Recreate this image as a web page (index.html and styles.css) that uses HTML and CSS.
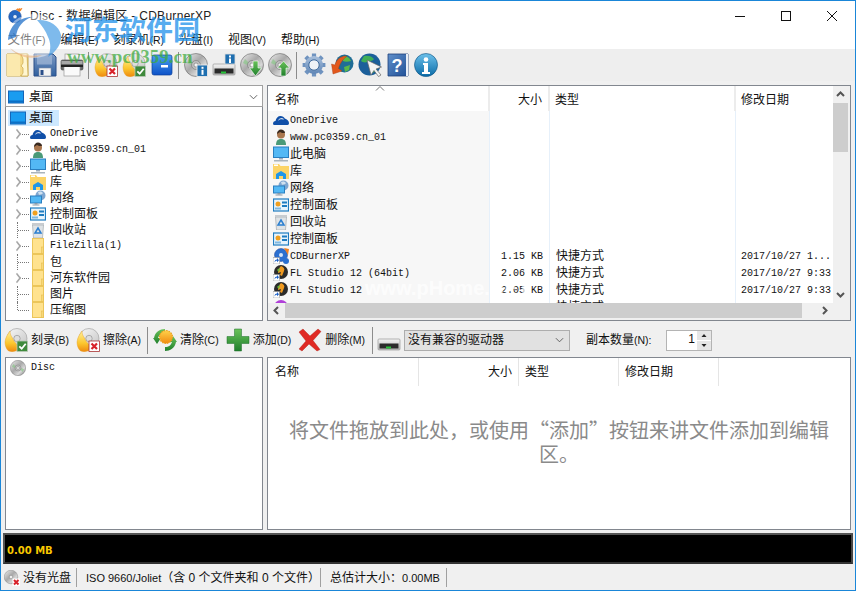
FILE: index.html
```
<!DOCTYPE html>
<html lang="zh">
<head>
<meta charset="utf-8">
<title>Disc - 数据编辑区 - CDBurnerXP</title>
<link rel="stylesheet" href="styles.css">
</head>
<body>
<svg class="sprite" xmlns="http://www.w3.org/2000/svg">
  <defs>
    <linearGradient id="gCd" x1="0" y1="0" x2="1" y2="1"><stop offset="0" stop-color="#eeeeee"/><stop offset=".45" stop-color="#a9a9a9"/><stop offset=".7" stop-color="#d8d8d8"/><stop offset="1" stop-color="#777"/></linearGradient>
    <linearGradient id="gBurn" x1="0" y1="0" x2="1" y2="1"><stop offset="0" stop-color="#f8f8f8"/><stop offset="1" stop-color="#c4c4c4"/></linearGradient>
    <linearGradient id="gFlame" x1="0" y1="0" x2="0" y2="1"><stop offset="0" stop-color="#fff09a"/><stop offset=".6" stop-color="#fbc62e"/><stop offset="1" stop-color="#ee8a10"/></linearGradient>
    <linearGradient id="gBlue" x1="0" y1="0" x2="0" y2="1"><stop offset="0" stop-color="#4aa0f0"/><stop offset="1" stop-color="#0d52c8"/></linearGradient>
    <linearGradient id="gBook" x1="0" y1="0" x2="1" y2="1"><stop offset="0" stop-color="#5f8fca"/><stop offset="1" stop-color="#1f4f96"/></linearGradient>
    <linearGradient id="gInfo" x1="0" y1="0" x2="0" y2="1"><stop offset="0" stop-color="#6cc0ea"/><stop offset="1" stop-color="#0b6ca8"/></linearGradient>
    <linearGradient id="gDrive" x1="0" y1="0" x2="0" y2="1"><stop offset="0" stop-color="#f4f4f4"/><stop offset="1" stop-color="#b8b8b8"/></linearGradient>
    <linearGradient id="gSun" x1="0" y1="0" x2="0" y2="1"><stop offset="0" stop-color="#ffd24a"/><stop offset="1" stop-color="#f08a10"/></linearGradient>
    <linearGradient id="gGreen" x1="0" y1="0" x2="0" y2="1"><stop offset="0" stop-color="#6ac25a"/><stop offset="1" stop-color="#1f7f2c"/></linearGradient>
    <linearGradient id="gFloppy" x1="0" y1="0" x2="0" y2="1"><stop offset="0" stop-color="#7d9ac4"/><stop offset="1" stop-color="#2f5f9e"/></linearGradient>
    <linearGradient id="gGear" x1="0" y1="0" x2="0" y2="1"><stop offset="0" stop-color="#a9c0dc"/><stop offset="1" stop-color="#5f86b6"/></linearGradient>

    <symbol id="cd" viewBox="0 0 24 24"><circle cx="12" cy="12" r="11.500" fill="url(#gCd)" stroke="#666" stroke-width=".6"/><path d="M5 6l4 4-2 2-4-2zM19 18l-4-4 2-2 4 2z" fill="#8cc88a" opacity=".7"/><circle cx="12" cy="12" r="4.500" fill="#bdbdbd" stroke="#777" stroke-width=".6"/><circle cx="12" cy="12" r="2" fill="#f4f4f4" stroke="#666" stroke-width=".5"/></symbol>
    <symbol id="burndisc" viewBox="0 0 24 24"><circle cx="13" cy="10.500" r="10" fill="url(#gBurn)" stroke="#999" stroke-width=".6"/><circle cx="13" cy="10.500" r="3.200" fill="#ddd" stroke="#888" stroke-width=".6"/><path d="M1 14C1.500 9 4 6 6 3c0 3 1 5 2.500 7 1 2 1.500 4 4 6 1.500 1 1.500 4 .5 6.500-3 1.500-7 1.500-9 0-2-2-3-5.500-3-8.500z" fill="url(#gFlame)" stroke="#e99a18" stroke-width=".4"/></symbol>
    <symbol id="badge-x" viewBox="0 0 24 24"><rect x="13" y="13" width="10.500" height="10.500" fill="#fff" stroke="#a33" stroke-width=".8"/><path d="M15.500 15.500l5.500 5.500M21 15.500l-5.500 5.500" stroke="#d8222a" stroke-width="2.200"/></symbol>
    <symbol id="badge-ok" viewBox="0 0 24 24"><rect x="13" y="13" width="10.500" height="10.500" fill="#3f8a3c" stroke="#b9c9b6" stroke-width=".8"/><path d="M15.300 18.300l2.400 2.400 4-5" fill="none" stroke="#fff" stroke-width="1.800"/></symbol>
    <symbol id="badge-i" viewBox="0 0 24 24"><rect x="13" y="12" width="10.500" height="11.500" fill="#1f6fb0" stroke="#e8e8e8" stroke-width=".9"/><rect x="17.500" y="13.800" width="2" height="2" fill="#fff"/><rect x="17.500" y="16.800" width="2" height="5" fill="#fff"/></symbol>

    <symbol id="i-folder" viewBox="0 0 24 24"><path d="M1 1h21v22H1z" fill="#f6dc8c" stroke="#c8a84a"/><path d="M1 1h13v22H1z" fill="#fbe9ae"/><path d="M15 1h6l1 22h-7l2-3v-5l-2-2 2-3V6z" fill="#fff6d0" stroke="#c8a84a" stroke-width=".7"/></symbol>
    <symbol id="i-save" viewBox="0 0 24 24"><path d="M1 1h19l3 3v19H1z" fill="url(#gFloppy)" stroke="#2a4f88"/><rect x="4" y="1.500" width="15" height="10" fill="#9fb6d6" opacity=".75"/><rect x="6" y="15" width="12" height="8" fill="#f4f4f4" stroke="#7d8ba3" stroke-width=".6"/><rect x="7.500" y="17" width="3" height="5" fill="#2a4f8a"/></symbol>
    <symbol id="i-print" viewBox="0 0 24 24"><rect x="5" y="1" width="14" height="7" fill="#f4f4f4" stroke="#999" stroke-width=".7"/><rect x="1" y="7" width="22" height="10" rx="1.500" fill="#6a6a6a" stroke="#444" stroke-width=".6"/><rect x="1.500" y="8" width="21" height="3" fill="#a8a8a8"/><rect x="4" y="13" width="16" height="10" fill="#fafafa" stroke="#999" stroke-width=".7"/><rect x="1" y="12" width="22" height="2" fill="#222"/></symbol>
    <symbol id="i-burn-x" viewBox="0 0 24 24"><use href="#burndisc"/><use href="#badge-x"/></symbol>
    <symbol id="i-burn-ok" viewBox="0 0 24 24"><use href="#burndisc"/><use href="#badge-ok"/></symbol>
    <symbol id="i-blue" viewBox="0 0 24 24"><rect x="2" y="2" width="20" height="20" rx="2" fill="url(#gBlue)" stroke="#0d3f9a" stroke-width=".7"/><rect x="11" y="12" width="7" height="2.500" fill="#fff"/></symbol>
    <symbol id="i-cd-info" viewBox="0 0 24 24"><use href="#cd"/><use href="#badge-i"/></symbol>
    <symbol id="drive" viewBox="0 0 24 24"><rect x="1" y="11" width="22" height="11" rx="1" fill="url(#gDrive)" stroke="#9a9a9a" stroke-width=".7"/><rect x="2.500" y="15.500" width="19" height="5" fill="#2b2b2b"/><rect x="9" y="18.500" width="5" height="2" fill="#27c43b"/></symbol>
    <symbol id="i-drive-info" viewBox="0 0 24 24"><use href="#drive"/><rect x="13" y="1" width="10" height="10" fill="#1f6fb0" stroke="#ddd" stroke-width=".8"/><rect x="17" y="2.500" width="2" height="2" fill="#fff"/><rect x="17" y="5.500" width="2" height="4.500" fill="#fff"/></symbol>
    <symbol id="i-cd-down" viewBox="0 0 24 24"><use href="#cd"/><path d="M13 8h5v7h3.500l-6 8-6-8H13z" fill="url(#gGreen)" stroke="#fff" stroke-width=".6"/></symbol>
    <symbol id="i-cd-up" viewBox="0 0 24 24"><use href="#cd"/><path d="M15.500 8l6 7H18v8h-5v-8H9.500z" fill="url(#gGreen)" stroke="#fff" stroke-width=".6"/></symbol>
    <symbol id="i-gear" viewBox="0 0 24 24"><g stroke="#6f93bf" stroke-width="4.200"><path d="M12 .6v22.800M.6 12h22.800M3.800 3.800l16.400 16.400M20.200 3.800L3.800 20.200"/></g><circle cx="12" cy="12" r="9" fill="url(#gGear)"/><circle cx="12" cy="12" r="5.200" fill="#eef2f7" stroke="#3f6a9c"/></symbol>
    <symbol id="i-update" viewBox="0 0 24 24"><circle cx="14.500" cy="10.500" r="9" fill="#1f6d96"/><path d="M13 3c4 0 7 2 8 5-3 1-6 1-8 0zM14 14l6-2-1 5-4 2z" fill="#5ab848"/><path d="M17 3C10 3 6 7 5 12l-3.500-1L3 21l9-3-3.500-2.500C10 11 12 7 17 3z" fill="#e2581c" stroke="#a83a10" stroke-width=".4"/></symbol>
    <symbol id="i-web" viewBox="0 0 24 24"><circle cx="11.500" cy="11.500" r="11" fill="#1b5f9a"/><path d="M6 3c4-1 8 0 10 3-2 3-5 1-7 3-2 1-5 0-6-1zM13 12c3 0 6 0 7 1-1 4-4 7-6 7-2-2-2-5-1-8z" fill="#3fae56"/><path d="M9 7l14.500 7-5.500 2 5 6-2.500 1.500-4.500-6L13 22z" fill="#f4f4f4" stroke="#666" stroke-width=".7"/></symbol>
    <symbol id="i-help" viewBox="0 0 24 24"><path d="M2 1h20v22H2z" fill="url(#gBook)" stroke="#1f3f78" stroke-width=".8"/><path d="M20 1h2v22h-2z" fill="#e8eef6"/><text x="11" y="19" text-anchor="middle" font-family="Liberation Sans" font-weight="700" font-size="18" fill="#fff">?</text></symbol>
    <symbol id="i-info" viewBox="0 0 24 24"><circle cx="12" cy="12" r="11.500" fill="url(#gInfo)" stroke="#0a4f80" stroke-width=".6"/><circle cx="12" cy="6.500" r="2.300" fill="#fff"/><path d="M9 10h5v9h2v2H8v-2h2v-7H9z" fill="#fff"/></symbol>

    <symbol id="i-clear" viewBox="0 0 24 24"><path d="M1 10C2 4 7 1 12 1v4C8 5 6 7 5 10h3l-4 6-4-6z" fill="url(#gGreen)"/><path d="M23 14c-1 6-6 9-11 9v-4c4 0 6-2 7-5h-3l4-6 4 6z" fill="url(#gGreen)"/><circle cx="13" cy="9" r="6.500" fill="url(#gSun)" stroke="#e8a020" stroke-width="1.200" stroke-dasharray="1.500 1"/></symbol>
    <symbol id="i-add" viewBox="0 0 24 24"><path d="M8.500 1h7v7.500H23v7h-7.500V23h-7v-7.500H1v-7h7.500z" fill="url(#gGreen)" stroke="#1c6f2a" stroke-width=".5"/></symbol>
    <symbol id="i-del" viewBox="0 0 24 24"><path d="M1 4l4-3 7 7 8-7 3 2.500-8 9 7 9-3 1.500-8-7-7 7-3-2 7-8z" fill="#e02a24" stroke="#a81810" stroke-width=".4"/></symbol>

    <symbol id="i-desktop" viewBox="0 0 16 16"><rect x=".5" y="2" width="15" height="12" fill="#1a9cf0" stroke="#1565b8"/><rect x="1" y="11.500" width="14" height="2" fill="#0d6fc4"/></symbol>
    <symbol id="i-onedrive" viewBox="0 0 16 16"><path d="M0 12c0-2 1-3 2.500-3C3 6 5 4 7.500 4c2 0 3.500 1 4.300 2.500C14 7 16 9 16 11c0 1-.5 2-1.500 2H2c-1 0-2-.3-2-1z" fill="#0f4fa8"/><path d="M5.500 8c1-1 3-2 5-.8" stroke="#fff" stroke-width="1" fill="none"/></symbol>
    <symbol id="i-user" viewBox="0 0 16 16"><path d="M3 16c0-4 1.500-6 5-6s5 2 5 6z" fill="#4a9a78"/><circle cx="8" cy="5.500" r="4" fill="#a9764e"/><path d="M4 5c0-3 2-4.500 4-4.500S12 2 12 4c-2 0-4 0-5-1-1 1-2 1-3 2z" fill="#3a2a20"/></symbol>
    <symbol id="i-pc" viewBox="0 0 16 16"><rect x=".5" y="1" width="15" height="10.500" fill="#53b8f4" stroke="#2a7fc0"/><rect x="6" y="12" width="4" height="1.500" fill="#9ab"/><rect x="1" y="14" width="14" height="1.500" fill="#aab4bc"/></symbol>
    <symbol id="i-lib" viewBox="0 0 16 16"><path d="M0 1h6l1.500 2H16v13H0z" fill="#fcd467"/><rect x="1" y="1.500" width="4" height="1.500" fill="#fff"/><path d="M3 11l5-3 5 3v5h-3v-3H6v3H3z" fill="#1f96e8"/></symbol>
    <symbol id="i-net" viewBox="0 0 16 16"><circle cx="10.500" cy="5.500" r="5" fill="#7fa6d0"/><path d="M8 2c2-1 4-.5 5 1-1 2-3 1-4 2z" fill="#cfe0ef"/><rect x=".5" y="6" width="11" height="7" fill="#53b8f4" stroke="#2a7fc0"/><rect x="4.500" y="13" width="3" height="1.500" fill="#8a9aa8"/><rect x="2.500" y="14.500" width="7" height="1" fill="#8a9aa8"/></symbol>
    <symbol id="i-cp" viewBox="0 0 16 16"><rect x=".5" y="2" width="15" height="12" fill="#e8f4fc" stroke="#1f7cc0" stroke-width="1.200"/><circle cx="5" cy="7" r="2.500" fill="#f0a020"/><rect x="9" y="4.500" width="5" height="2" fill="#1f7cc0"/><rect x="9" y="8" width="5" height="2" fill="#1f7cc0"/><rect x="2" y="10.500" width="6" height="2" fill="#7fb8e0"/></symbol>
    <symbol id="i-bin" viewBox="0 0 16 16"><path d="M2.500 3h11l-1 13h-9z" fill="#dfe3e6" stroke="#a4a9ad" stroke-width=".7"/><rect x="2" y="1" width="12" height="2" fill="#c8ccd0"/><path d="M8 6l3 5H5z" fill="none" stroke="#2b7fd0" stroke-width="1.500"/></symbol>
    <symbol id="i-yf" viewBox="0 0 16 16"><rect x="2.500" y=".5" width="11" height="15" fill="#ffe28e" stroke="#ecc65a"/><rect x="11.500" y="9" width="2" height="6.500" fill="#f7d878" stroke="#e4b94a" stroke-width=".5"/></symbol>
    <symbol id="shortcut" viewBox="0 0 16 16"><rect x="0" y="9.500" width="6.500" height="6.500" fill="#fff" stroke="#8a8a8a" stroke-width=".5"/><path d="M1.500 14.500c0-2 1-3 2.500-3V10l2 2.200L4 14.300v-1.500c-1 0-2 .5-2.500 1.700z" fill="#1b60c8"/></symbol>
    <symbol id="i-cdb" viewBox="0 0 16 16"><circle cx="8" cy="7" r="6.500" fill="#2a6fd0" stroke="#173f90" stroke-width=".5"/><circle cx="8" cy="7" r="2" fill="#d4e4f8"/><path d="M11 0l5 1-1 6z" fill="#f08020"/><circle cx="13" cy="13" r="3" fill="#2a6fd0"/><use href="#shortcut"/></symbol>
    <symbol id="i-fl" viewBox="0 0 16 16"><circle cx="8" cy="7" r="7" fill="#2b2b2b"/><path d="M8 1c3 1 4 3 3 5l-2 5-2-1 1-3-3 1c0-3 1-5 3-7z" fill="#f09a20"/><path d="M4 5c1-1 2-2 3-2l-1 4z" fill="#6cb83a"/><use href="#shortcut"/></symbol>
    <symbol id="i-purple" viewBox="0 0 16 16"><circle cx="8" cy="8" r="7" fill="#b040d8"/></symbol>
    <symbol id="i-app" viewBox="0 0 24 24"><circle cx="10.500" cy="13" r="9.500" fill="#2568c4" stroke="#123f8a" stroke-width=".7"/><circle cx="10.500" cy="13" r="3" fill="#e4eefa" stroke="#123f8a" stroke-width=".5"/><path d="M11 1c2 1 3 0 4-1 0 1.500 1 2 3-.5 0 1.500 0 2.500 4-.5-1 3-3 6-5 7-2-2-4-3-6-5z" fill="#f0862a"/></symbol>
    <symbol id="i-nodisc" viewBox="0 0 16 16"><circle cx="7" cy="7" r="6.800" fill="url(#gCd)" stroke="#777" stroke-width=".4"/><circle cx="7" cy="7" r="1.800" fill="#eee" stroke="#666" stroke-width=".4"/><rect x="8.500" y="8.500" width="7.500" height="7.500" fill="#fff"/><path d="M10 10l4.500 4.500M14.500 10L10 14.500" stroke="#d8222a" stroke-width="2"/></symbol>
  </defs>
</svg>

<div class="window">
  <header class="titlebar">
    <svg class="ic16 title-icon"><use href="#i-app"/></svg>
    <span class="title-text">Disc - 数据编辑区 - CDBurnerXP</span>
    <div class="caps">
      <svg class="cap" viewBox="0 0 46 12"><path d="M18 6.500h10" stroke="#111"/></svg>
      <svg class="cap" viewBox="0 0 46 12"><rect x="18.500" y="1.500" width="9" height="9" fill="none" stroke="#111"/></svg>
      <svg class="cap" viewBox="0 0 46 12"><path d="M18 1l10 10M28 1L18 11" stroke="#111" fill="none"/></svg>
    </div>
  </header>

  <nav class="menubar">
    <span>文件<span class="k">(F)</span></span><span>编辑<span class="k">(E)</span></span><span>刻录机<span class="k">(R)</span></span><span>光盘<span class="k">(I)</span></span><span>视图<span class="k">(V)</span></span><span>帮助<span class="k">(H)</span></span>
  </nav>

  <div class="toolbar">
    <svg class="tb tight"><use href="#i-folder"/></svg>
    <svg class="tb tight"><use href="#i-save"/></svg>
    <svg class="tb"><use href="#i-print"/></svg>
    <i class="tsep"></i>
    <svg class="tb"><use href="#i-burn-x"/></svg>
    <svg class="tb"><use href="#i-burn-ok"/></svg>
    <svg class="tb"><use href="#i-blue"/></svg>
    <i class="tsep"></i>
    <svg class="tb"><use href="#i-cd-info"/></svg>
    <svg class="tb"><use href="#i-drive-info"/></svg>
    <svg class="tb"><use href="#i-cd-down"/></svg>
    <svg class="tb"><use href="#i-cd-up"/></svg>
    <i class="tsep"></i>
    <svg class="tb"><use href="#i-gear"/></svg>
    <svg class="tb"><use href="#i-update"/></svg>
    <svg class="tb"><use href="#i-web"/></svg>
    <svg class="tb"><use href="#i-help"/></svg>
    <svg class="tb"><use href="#i-info"/></svg>
  </div>

  <section class="panes panes-top">
    <div class="left-col">
      <div class="combo">
        <svg class="ic16"><use href="#i-desktop"/></svg><span>桌面</span>
        <svg class="chev" viewBox="0 0 10 6"><path d="M1 1l4 4 4-4" fill="none" stroke="#555"/></svg>
      </div>
      <div class="tree">
        <div class="t-root"><span class="t-sel"><svg class="ic16"><use href="#i-desktop"/></svg><span>桌面</span></span></div>
        <div class="t-row"><i class="exp"></i><i class="dots"></i><svg class="ic16"><use href="#i-onedrive"/></svg><span class="lat">OneDrive</span></div>
        <div class="t-row"><i class="exp"></i><i class="dots"></i><svg class="ic16"><use href="#i-user"/></svg><span class="lat">www.pc0359.cn_01</span></div>
        <div class="t-row"><i class="exp"></i><i class="dots"></i><svg class="ic16"><use href="#i-pc"/></svg><span>此电脑</span></div>
        <div class="t-row"><i class="exp"></i><i class="dots"></i><svg class="ic16"><use href="#i-lib"/></svg><span>库</span></div>
        <div class="t-row"><i class="exp"></i><i class="dots"></i><svg class="ic16"><use href="#i-net"/></svg><span>网络</span></div>
        <div class="t-row"><i class="exp"></i><i class="dots"></i><svg class="ic16"><use href="#i-cp"/></svg><span>控制面板</span></div>
        <div class="t-row"><i class="noexp"></i><i class="dots"></i><svg class="ic16"><use href="#i-bin"/></svg><span>回收站</span></div>
        <div class="t-row"><i class="exp"></i><i class="dots"></i><svg class="ic16"><use href="#i-yf"/></svg><span class="lat">FileZilla(1)</span></div>
        <div class="t-row"><i class="noexp"></i><i class="dots"></i><svg class="ic16"><use href="#i-yf"/></svg><span>包</span></div>
        <div class="t-row"><i class="exp"></i><i class="dots"></i><svg class="ic16"><use href="#i-yf"/></svg><span>河东软件园</span></div>
        <div class="t-row"><i class="noexp"></i><i class="dots"></i><svg class="ic16"><use href="#i-yf"/></svg><span>图片</span></div>
        <div class="t-row"><i class="noexp last"></i><i class="dots"></i><svg class="ic16"><use href="#i-yf"/></svg><span>压缩图</span></div>
      </div>
    </div>

    <div class="pane files">
      <div class="files-body">
        <div class="list">
          <div class="l-head">
            <span class="h-name">名称<svg class="sort" viewBox="0 0 10 5"><path d="M1 4.500l4-4 4 4" fill="none" stroke="#777"/></svg></span>
            <span class="h-size">大小</span><span class="h-type">类型</span><span class="h-date">修改日期</span>
          </div>
          <div class="l-row"><span class="c-name"><svg class="ic16"><use href="#i-onedrive"/></svg><span class="lat">OneDrive</span></span><span class="c-size"></span><span class="c-type"></span><span class="c-date"></span></div>
          <div class="l-row"><span class="c-name"><svg class="ic16"><use href="#i-user"/></svg><span class="lat">www.pc0359.cn_01</span></span><span class="c-size"></span><span class="c-type"></span><span class="c-date"></span></div>
          <div class="l-row"><span class="c-name"><svg class="ic16"><use href="#i-pc"/></svg><span>此电脑</span></span><span class="c-size"></span><span class="c-type"></span><span class="c-date"></span></div>
          <div class="l-row"><span class="c-name"><svg class="ic16"><use href="#i-lib"/></svg><span>库</span></span><span class="c-size"></span><span class="c-type"></span><span class="c-date"></span></div>
          <div class="l-row"><span class="c-name"><svg class="ic16"><use href="#i-net"/></svg><span>网络</span></span><span class="c-size"></span><span class="c-type"></span><span class="c-date"></span></div>
          <div class="l-row"><span class="c-name"><svg class="ic16"><use href="#i-cp"/></svg><span>控制面板</span></span><span class="c-size"></span><span class="c-type"></span><span class="c-date"></span></div>
          <div class="l-row"><span class="c-name"><svg class="ic16"><use href="#i-bin"/></svg><span>回收站</span></span><span class="c-size"></span><span class="c-type"></span><span class="c-date"></span></div>
          <div class="l-row"><span class="c-name"><svg class="ic16"><use href="#i-cp"/></svg><span>控制面板</span></span><span class="c-size"></span><span class="c-type"></span><span class="c-date"></span></div>
          <div class="l-row"><span class="c-name"><svg class="ic16"><use href="#i-cdb"/></svg><span class="lat">CDBurnerXP</span></span><span class="c-size lat">1.15 KB</span><span class="c-type">快捷方式</span><span class="c-date lat">2017/10/27 1...</span></div>
          <div class="l-row"><span class="c-name"><svg class="ic16"><use href="#i-fl"/></svg><span class="lat">FL Studio 12 (64bit)</span></span><span class="c-size lat">2.06 KB</span><span class="c-type">快捷方式</span><span class="c-date lat">2017/10/27 9:33</span></div>
          <div class="l-row"><span class="c-name"><svg class="ic16"><use href="#i-fl"/></svg><span class="lat">FL Studio 12</span></span><span class="c-size lat">2.05 KB</span><span class="c-type">快捷方式</span><span class="c-date lat">2017/10/27 9:33</span></div>
          <div class="l-row"><span class="c-name"><svg class="ic16"><use href="#i-purple"/></svg></span><span class="c-size"></span><span class="c-type">快捷方式</span><span class="c-date"></span></div>
        </div>
        <div class="vscroll">
          <svg class="sb-btn" viewBox="0 0 15 17"><path d="M4 10l3.500-3.500L11 10" fill="none" stroke="#555" stroke-width="2"/></svg>
          <div class="v-thumb"></div>
          <div class="sb-fill"></div>
          <svg class="sb-btn" viewBox="0 0 15 17"><path d="M4 7l3.500 3.500L11 7" fill="none" stroke="#555" stroke-width="2"/></svg>
        </div>
      </div>
      <div class="hscroll">
        <svg class="sb-h" viewBox="0 0 17 15"><path d="M10 4L6.500 7.500 10 11" fill="none" stroke="#555" stroke-width="2"/></svg>
        <div class="h-thumb"></div>
        <div class="sb-fill"></div>
        <svg class="sb-h" viewBox="0 0 17 15"><path d="M7 4l3.500 3.500L7 11" fill="none" stroke="#555" stroke-width="2"/></svg>
        <div class="corner"></div>
      </div>
    </div>
  </section>

  <div class="toolbar2">
    <button class="tbtn"><svg class="tb"><use href="#i-burn-ok"/></svg><span>刻录<span class="k">(B)</span></span></button>
    <button class="tbtn"><svg class="tb"><use href="#i-burn-x"/></svg><span>擦除<span class="k">(A)</span></span></button>
    <i class="tsep2"></i>
    <button class="tbtn"><svg class="tb"><use href="#i-clear"/></svg><span>清除<span class="k">(C)</span></span></button>
    <button class="tbtn"><svg class="tb"><use href="#i-add"/></svg><span>添加<span class="k">(D)</span></span></button>
    <button class="tbtn"><svg class="tb"><use href="#i-del"/></svg><span>删除<span class="k">(M)</span></span></button>
    <i class="tsep2 second"></i>
    <svg class="tb drive-ic"><use href="#drive"/></svg>
    <div class="drive-select"><span>没有兼容的驱动器</span><svg class="chev" viewBox="0 0 10 6"><path d="M1 1l4 4 4-4" fill="none" stroke="#555"/></svg></div>
    <label class="copies">副本数量<span class="k">(N):</span></label>
    <div class="spin"><span class="spin-val">1</span><div class="spin-btns">
      <svg viewBox="0 0 13 9"><path d="M4 6l2.500-3L9 6z" fill="#222"/></svg>
      <svg viewBox="0 0 13 9"><path d="M4 3l2.500 3L9 3z" fill="#222"/></svg>
    </div></div>
  </div>

  <section class="panes panes-bottom">
    <div class="pane disc-tree">
      <div class="disc-row"><svg class="ic16"><use href="#cd"/></svg><span class="lat">Disc</span></div>
    </div>
    <div class="pane disc-files">
      <div class="d-head"><span class="d-name">名称</span><span class="d-size">大小</span><span class="d-type">类型</span><span class="d-date">修改日期</span></div>
      <p class="placeholder">将文件拖放到此处，或使用“添加”按钮来讲文件添加到编辑区。</p>
    </div>
  </section>

  <div class="capacity"><span>0.00 MB</span></div>

  <footer class="status">
    <div class="st st-1"><svg class="ic16"><use href="#i-nodisc"/></svg><span>没有光盘</span></div>
    <div class="st st-2"><span class="k11">ISO 9660/Joliet</span>（含 0 个文件夹和 0 个文件）</div>
    <div class="st st-3">总估计大小：<span class="k11">0.00MB</span></div>
  </footer>

  <div class="wm-logo" aria-hidden="true">
    <svg viewBox="0 0 56 46">
      <ellipse cx="28" cy="22" rx="27" ry="22" fill="#fff" opacity=".45"/>
      <path d="M2 26C3 12 13 3 26 3c-9 3-15 10-16 20-3 1-6 2-8 3z" fill="#2070c8" opacity=".75"/>
      <path d="M31 6c11-1 22 5 24 15 1 8-4 16-13 22 3-7 3-14 0-20-2-6-6-11-11-17z" fill="#2e8fe0" opacity=".62"/>
      <path d="M4 34c8 7 20 9 32 7-6 4-22 5-32-7z" fill="#e8a060" opacity=".5"/>
    </svg>
  </div>
  <div class="wm-cn" aria-hidden="true">河东软件园</div>
  <div class="wm-url" aria-hidden="true">www.pc0359.cn</div>
  <div class="wm-faint" aria-hidden="true">www.pHome.NET</div>
</div>
</body>
</html>
```
FILE: styles.css
```
* { box-sizing: border-box; }
html, body { margin: 0; padding: 0; }
body { width: 856px; height: 591px; overflow: hidden; }
.sprite { display: block; width: 0; height: 0; }

.window {
  position: relative;
  width: 856px; height: 591px;
  display: flex; flex-direction: column;
  border: 1px solid #1a86d8;
  background: #f0f0f0;
  font: 12px/16px "Liberation Sans", "Noto Sans CJK SC", sans-serif;
  color: #111;
  overflow: hidden;
}
.lat { font-family: "Liberation Mono", "Noto Sans CJK SC", monospace; font-size: 10px; }
.k { font-size: 10.5px; }
.k11 { font-size: 11px; }
.ic16 { width: 16px; height: 16px; flex: none; display: block; }

.titlebar { height: 29px; background: #fff; display: flex; align-items: center; padding-left: 7px; flex: none; }
.title-text { margin-left: 6px; color: #222; letter-spacing: .3px; }
.caps { margin-left: auto; display: flex; }
.cap { width: 46px; height: 12px; display: block; }

.menubar { height: 19px; background: #fff; display: flex; gap: 15px; align-items: center; padding-left: 7px; flex: none; }

.toolbar { height: 32px; display: flex; align-items: center; gap: 4px; padding-left: 5px; background: #eeeeee; flex: none; }
.tb { width: 24px; height: 24px; display: block; flex: none; }
.tb.tight { margin-right: -1px; }
.tsep { width: 1px; height: 27px; background: #8c8c8c; margin-right: 1px; }

.panes { display: flex; gap: 4px; padding: 0 4px; flex: none; }
.panes-top { height: 236px; margin-top: 4px; }
.panes-bottom { height: 173px; }

.left-col { width: 258px; display: flex; flex-direction: column; flex: none; }
.combo { height: 22px; background: #fff; border: 1px solid #a0a0a0; display: flex; align-items: center; gap: 5px; padding: 2px 4px 0 2px; font-size: 12px; }
.chev { width: 9px; height: 6px; margin-left: auto; flex: none; }
.tree { flex: 1; background: #fff; border: 1px solid #82878f; border-top: 0; padding: 3px 0 0 2px; overflow: hidden; }
.t-root { height: 16px; }
.t-sel { display: inline-flex; align-items: center; gap: 3px; background: #cce8ff; padding: 0 4px 0 2px; height: 16px; width: 51px; }
.t-row { height: 16px; display: flex; align-items: center; }
.t-row .ic16 { margin-right: 4px; }
.exp { width: 8px; height: 8px; flex: none; margin-left: 5px; border-right: 2px solid #a6a6a6; border-top: 2px solid #a6a6a6; transform: scale(.72, .95) rotate(45deg); }
.noexp { width: 1px; height: 16px; flex: none; margin-left: 9px; border-left: 1px dotted #777; }
.noexp.last { height: 8px; align-self: flex-start; }
.dots { width: 7px; flex: none; margin: 0 1px; border-top: 1px dotted #777; }
.noexp + .dots { margin-left: 0; width: 11px; }

.pane { background: #fff; border: 1px solid #82878f; }
.files { flex: 1; display: flex; flex-direction: column; background: #f0f0f0; padding-right: 2px; padding-bottom: 2px; min-width: 0; }
.files-body { flex: 1; display: flex; min-height: 0; }
.list { width: 565px; height: 217px; overflow: hidden; background: #fff; flex: none; }
.l-head, .l-row { display: grid; grid-template-columns: 222px 60px 186px 97px; }
.l-head { height: 25px; align-items: center; }
.l-head span { height: 25px; line-height: 29px; border-right: 2px solid #ececec; position: relative; }
.h-name { padding-left: 7px; }
.h-size { text-align: right; padding-right: 6px; }
.h-type { padding-left: 5px; }
.h-date { padding-left: 5px; border-right: 0 !important; }
.sort { position: absolute; left: 107px; top: 0; width: 10px; height: 5px; }
.l-row { height: 17px; line-height: 19px; }
.l-row > span { border-right: 1px solid #e6f0fa; overflow: hidden; white-space: nowrap; }
.c-name { background: #f7f7f7; display: flex; align-items: center; gap: 1px; padding: 1px 0 0 5px; }
.c-size { text-align: right; padding-right: 6px; }
.c-type { padding-left: 6px; }
.c-date { padding-left: 5px; border-right: 0 !important; }

.vscroll { width: 15px; display: flex; flex-direction: column; background: #f0f0f0; flex: none; }
.sb-btn { width: 15px; height: 17px; display: block; flex: none; }
.v-thumb { height: 49px; background: #cdcdcd; flex: none; }
.sb-fill { flex: 1; }
.hscroll { height: 15px; display: flex; background: #f0f0f0; flex: none; }
.sb-h { width: 17px; height: 15px; display: block; flex: none; }
.h-thumb { width: 517px; background: #cdcdcd; flex: none; }
.corner { width: 15px; flex: none; }

.toolbar2 { height: 36px; display: flex; align-items: center; padding: 2px 0 0 3px; flex: none; }
.tbtn { display: flex; align-items: center; gap: 3px; border: 0; padding: 0; margin: 0 7px 0 0; background: none; font: inherit; color: #111; }
.tsep2 { width: 1px; height: 27px; background: #8c8c8c; margin: 0 5px 0 -1px; flex: none; }
.tsep2.second { margin-left: 0; }
.drive-ic { margin-right: 3px; margin-left: -1px; }
.drive-select { width: 166px; height: 21px; background: #e1e1e1; border: 1px solid #adadad; display: flex; align-items: center; padding: 0 5px 0 3px; flex: none; }
.copies { margin-left: 16px; width: 80px; flex: none; }
.spin { width: 46px; height: 21px; background: #fff; border: 1px solid #b4b4b4; display: flex; flex: none; }
.spin-val { flex: 1; text-align: right; padding-right: 2px; line-height: 17px; }
.spin-btns { width: 14px; display: flex; flex-direction: column; gap: 1px; }
.spin-btns svg { flex: 1; display: block; background: #e6e6e6; width: 14px; height: 9px; }

.disc-tree { width: 258px; flex: none; padding: 2px 0 0 4px; }
.disc-row { display: flex; align-items: center; gap: 5px; height: 16px; }
.disc-files { flex: 1; min-width: 0; }
.d-head { display: grid; grid-template-columns: 151px 100px 100px 100px; height: 26px; line-height: 28px; }
.d-head span { border-right: 1px solid #e5e5e5; }
.d-name { padding-left: 7px; }
.d-size { text-align: right; padding-right: 6px; }
.d-type { padding-left: 6px; }
.d-date { padding-left: 6px; }
.placeholder { margin: 34px 10px 0; font: 20px/24px "Noto Sans CJK SC", sans-serif; color: #8a8a8a; text-align: center; }

.capacity { height: 31px; margin: 3px 2px 0 2px; background: #000; border: 2px solid; border-color: #555 #444 #333 #555; color: #f8c800; font: 700 10px/14px "DejaVu Sans", sans-serif; padding: 9px 0 0 2px; flex: none; }

.status { height: 25px; margin-top: 1px; display: flex; align-items: center; background: #f0f0f0; flex: 1; }
.st { height: 19px; display: flex; align-items: center; border-right: 1px solid #a0a0a0; flex: none; white-space: nowrap; }
.st-1 { width: 76px; padding-left: 3px; gap: 3px; }
.st-2 { width: 244px; padding-left: 9px; }
.st-3 { width: 126px; padding-left: 9px; }

.wm-logo { position: absolute; left: 5px; top: 13px; width: 56px; height: 46px; pointer-events: none; }
.wm-logo svg { width: 56px; height: 46px; display: block; }
.wm-cn { position: absolute; left: 64px; top: 12px; font: 700 27px/32px "Noto Sans CJK SC", sans-serif; color: rgba(40,150,235,.78); white-space: nowrap; }
.wm-url { position: absolute; left: 66px; top: 46px; font: 700 19px/20px "Liberation Serif", serif; color: rgba(60,170,60,.72); white-space: nowrap; }
.wm-faint { position: absolute; left: 364px; top: 275px; font: 700 20px/24px "Liberation Sans", sans-serif; color: rgba(255,255,255,.7); white-space: nowrap; }
```
